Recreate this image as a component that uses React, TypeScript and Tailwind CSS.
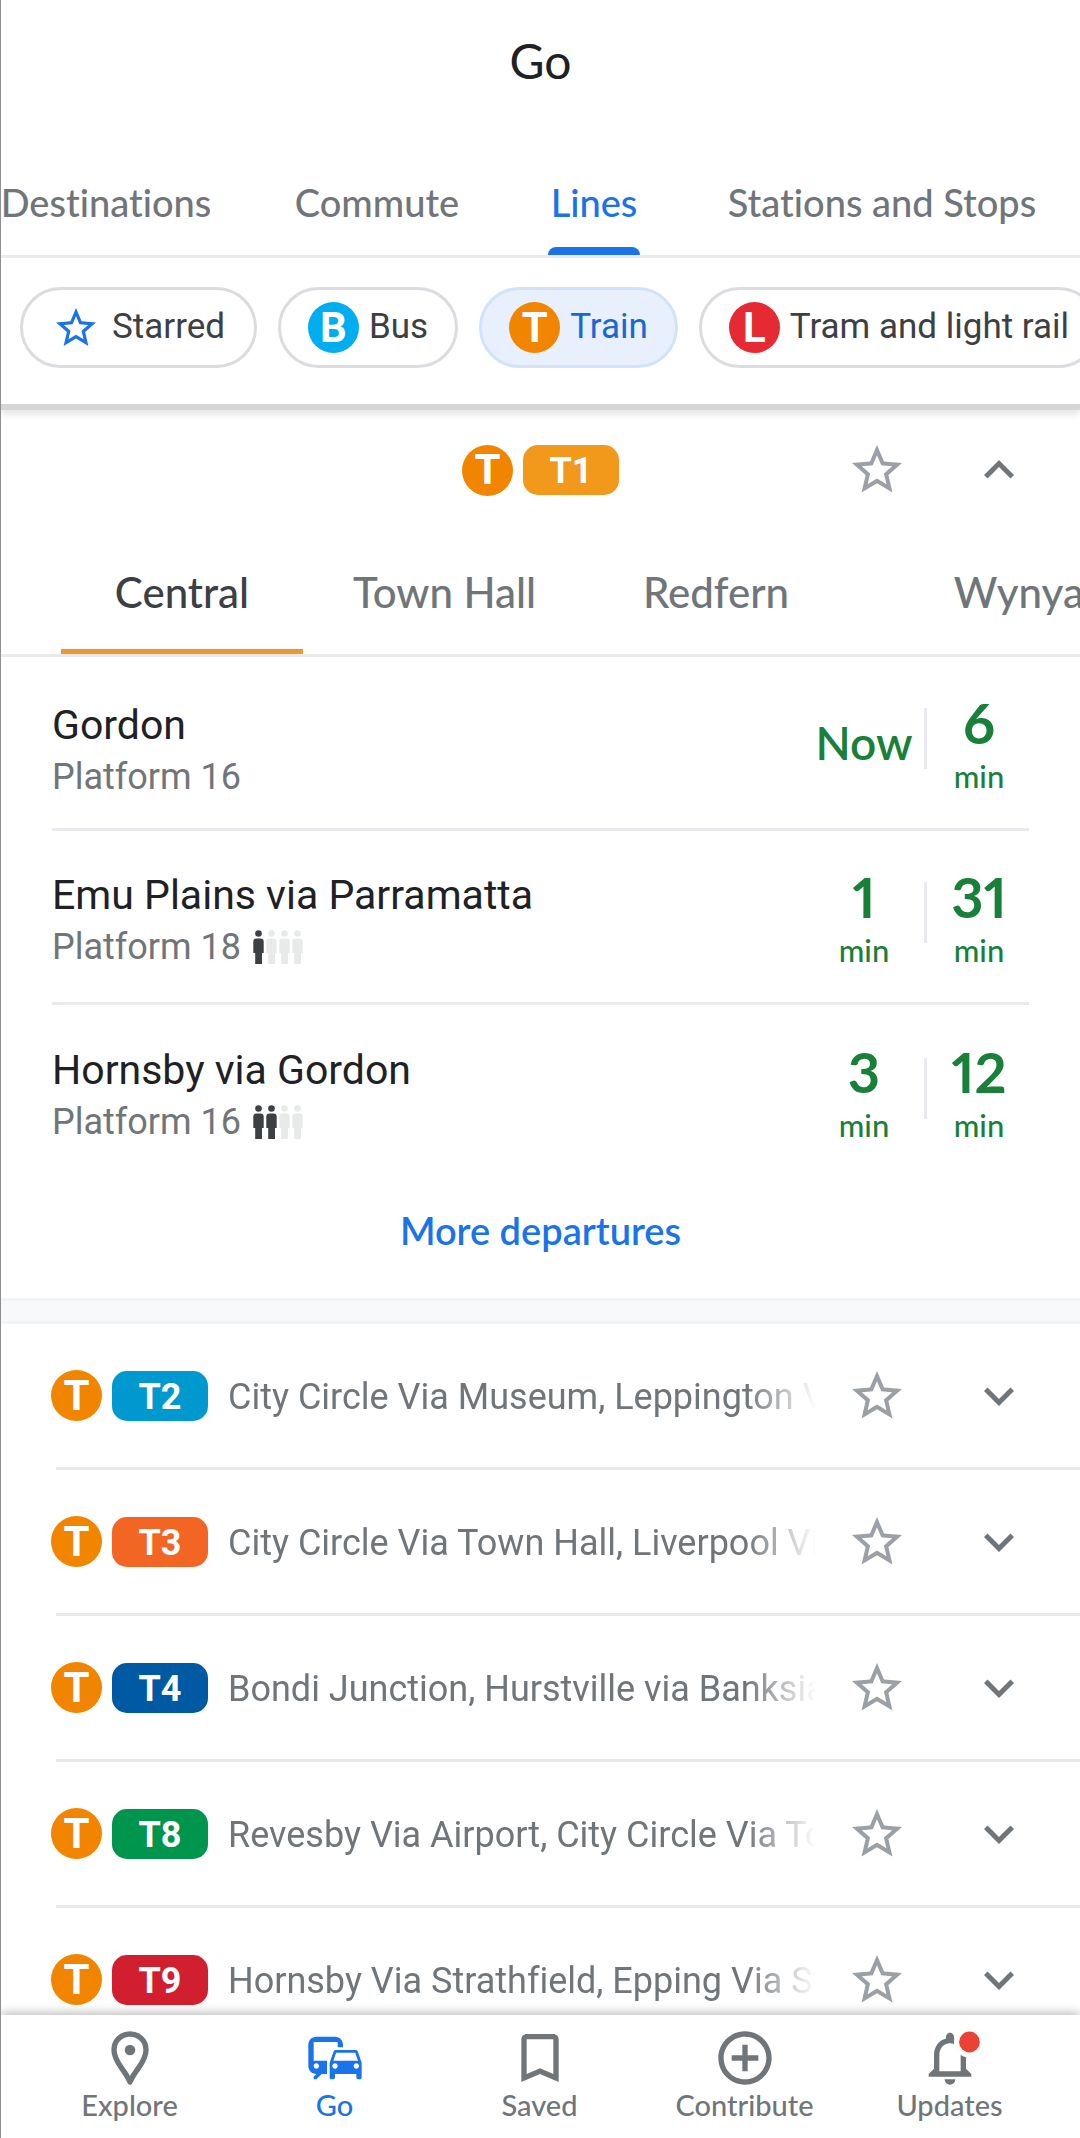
import { useState } from "react";
import type { ReactNode } from "react";
import {
  MdAddCircleOutline,
  MdBookmarkBorder,
  MdCommute,
  MdExpandLess,
  MdExpandMore,
  MdStarBorder,
} from "react-icons/md";

const sections = [
  { name: "Destinations", cell: "w-[210px]" },
  { name: "Commute", cell: "ml-[83px] w-[166px]" },
  { name: "Lines", cell: "ml-[88px] w-[92px]" },
  { name: "Stations and Stops", cell: "ml-[85px] w-[314px]" },
];

function ModeBadge({ letter, color }: { letter: string; color: string }) {
  return (
    <span
      className={`flex size-[51px] shrink-0 items-center justify-center rounded-full text-[42px] leading-none font-bold text-white ${color}`}
    >
      {letter}
    </span>
  );
}

const chips: { name: string; icon: ReactNode; gap: string; pad: string }[] = [
  { name: "Starred", icon: <MdStarBorder className="size-12 text-[#1a73e8]" />, gap: "gap-3", pad: "px-[29px]" },
  { name: "Bus", icon: <ModeBadge letter="B" color="bg-[#00aeef]" />, gap: "gap-[10px]", pad: "px-[27px]" },
  { name: "Train", icon: <ModeBadge letter="T" color="bg-[#f18500]" />, gap: "gap-[10px]", pad: "px-[27px]" },
  { name: "Tram and light rail", icon: <ModeBadge letter="L" color="bg-[#e52a33]" />, gap: "gap-[10px]", pad: "px-[27px]" },
];

const stations = [
  { name: "Central", cell: "w-[242px]" },
  { name: "Town Hall", cell: "w-[283px]" },
  { name: "Redfern", cell: "w-[260px]" },
  { name: "Wynyard", cell: "w-[384px]" },
];

type Departure = { to: string; platform: string; crowd: number; times: string[] };

const departures: Departure[] = [
  { to: "Gordon", platform: "Platform 16", crowd: 0, times: ["Now", "6"] },
  { to: "Emu Plains via Parramatta", platform: "Platform 18", crowd: 1, times: ["1", "31"] },
  { to: "Hornsby via Gordon", platform: "Platform 16", crowd: 2, times: ["3", "12"] },
];

const lines = [
  { id: "T2", color: "bg-[#0099cf]", route: "City Circle Via Museum, Leppington Via Granville" },
  { id: "T3", color: "bg-[#f26522]", route: "City Circle Via Town Hall, Liverpool Via Bankstown" },
  { id: "T4", color: "bg-[#005aa3]", route: "Bondi Junction, Hurstville via Banksia, Cronulla" },
  { id: "T8", color: "bg-[#00954c]", route: "Revesby Via Airport, City Circle Via Town Hall" },
  { id: "T9", color: "bg-[#d11f2f]", route: "Hornsby Via Strathfield, Epping Via Strathfield" },
];

function LinePill({ id, color }: { id: string; color: string }) {
  return (
    <span
      className={`flex h-[50px] w-24 shrink-0 items-center justify-center rounded-[15px] pt-[2px] text-[36px] leading-none font-bold text-white ${color}`}
    >
      {id}
    </span>
  );
}

function RowActions({ id, open }: { id: string; open?: boolean }) {
  return (
    <div className="flex shrink-0 items-center gap-[62px] pr-[51px]">
      <button type="button" aria-label={`Star ${id}`} className="text-[#9aa0a6]">
        <MdStarBorder className="size-[60px]" />
      </button>
      <button type="button" aria-label={open ? `Collapse ${id}` : `Expand ${id}`} aria-expanded={!!open} className="text-[#70757a]">
        {open ? <MdExpandLess className="size-[60px]" /> : <MdExpandMore className="size-[60px]" />}
      </button>
    </div>
  );
}

function Crowding({ level }: { level: number }) {
  return (
    <svg viewBox="0 0 50 34" className="h-[34px] w-[50px]" role="img" aria-label={`Crowding ${level} of 4`}>
      {[0, 1, 2, 3].map((i) => (
        <g key={i} transform={`translate(${i * 13} 0)`} fill={i < level ? "#3c4043" : "#e8eaea"}>
          <circle cx="5.500" cy="3.500" r="3.300" />
          <path d="M3.500 8.500h4a3.200 3.200 0 0 1 3.200 3.200V23H9v11H2.200V23H.3V11.700a3.200 3.200 0 0 1 3.200-3.200z" />
        </g>
      ))}
    </svg>
  );
}

function Time({ value }: { value: string }) {
  return (
    <div className="flex w-[100px] flex-col items-center font-[Lato,sans-serif] text-[#188038]">
      {value === "Now" ? (
        <span className="text-[46px] leading-none font-semibold">Now</span>
      ) : (
        <>
          <span className="pt-1 text-[56px] leading-[62px] font-bold proportional-nums">{value}</span>
          <span className="text-[31px] leading-[44px] font-medium">min</span>
        </>
      )}
    </div>
  );
}

function PinIcon() {
  return (
    <svg viewBox="0 0 24 24" className="size-16" aria-hidden="true">
      <path
        d="M12 3c-3.500 0-6 2.600-6 6 0 2.500 1.300 4.600 2.800 6.700C10.300 17.800 11.300 19.300 12 21c.7-1.700 1.700-3.200 3.200-5.300C16.700 13.600 18 11.500 18 9c0-3.400-2.500-6-6-6z"
        fill="none"
        stroke="currentColor"
        strokeWidth="2"
        strokeLinejoin="round"
      />
      <circle cx="12" cy="9" r="2" fill="currentColor" />
    </svg>
  );
}

function BellIcon() {
  return (
    <svg viewBox="0 0 24 24" className="size-16 overflow-visible" aria-hidden="true">
      <path
        fill="currentColor"
        d="M12 22c1.100 0 2-.9 2-2h-4c0 1.100.9 2 2 2zm6-6v-5c0-3.070-1.640-5.640-4.500-6.320V4c0-.83-.67-1.500-1.500-1.500s-1.500.67-1.500 1.500v.68C7.630 5.360 6 7.920 6 11v5l-2 2v1h16v-1l-2-2zm-2 1H8v-6c0-2.480 1.510-4.500 4-4.500s4 2.020 4 4.500v6z"
      />
      <circle cx="19.300" cy="6" r="5.800" fill="#fff" />
      <circle cx="19.300" cy="6" r="3.900" fill="#ea4335" />
    </svg>
  );
}

const destinations: { name: string; icon: ReactNode }[] = [
  { name: "Explore", icon: <PinIcon /> },
  { name: "Go", icon: <MdCommute className="size-16" /> },
  { name: "Saved", icon: <MdBookmarkBorder className="size-16" /> },
  { name: "Contribute", icon: <MdAddCircleOutline className="size-16" /> },
  { name: "Updates", icon: <BellIcon /> },
];

export default function App() {
  const [section, setSection] = useState("Lines");
  const [mode, setMode] = useState("Train");
  const [station, setStation] = useState("Central");
  const [page, setPage] = useState("Go");

  return (
    <div className="flex h-screen flex-col overflow-hidden border-l border-[#8f8f8f] bg-white font-[Roboto,sans-serif] [font-variant-ligatures:none]">
      <header className="relative z-10 shrink-0 border-b-[6px] border-[#d4d6d8] bg-white shadow-[0_4px_8px_rgba(0,0,0,0.12)]">
        <h1 className="pt-[30px] text-center font-[Lato,sans-serif] text-[48px] leading-[62px] text-[#202124]">Go</h1>
        <nav aria-label="Sections" className="mt-[63px] flex overflow-hidden border-b-[3px] border-[#e8eaed]">
          {sections.map((s) => (
            <button
              key={s.name}
              type="button"
              onClick={() => setSection(s.name)}
              className={`flex h-[100px] shrink-0 flex-col items-center justify-between pt-[22px] font-[Lato,sans-serif] text-[38px] leading-[50px] font-medium whitespace-nowrap ${s.cell} ${section === s.name ? "text-[#1a73e8]" : "text-[#70757a]"}`}
            >
              {s.name}
              <span className={`h-2 w-full rounded-t-lg ${section === s.name ? "bg-[#1a73e8]" : "bg-transparent"}`} />
            </button>
          ))}
        </nav>
        <div className="flex gap-[21px] overflow-hidden pt-[29px] pb-9 pl-[19px]">
          {chips.map((c) => (
            <button
              key={c.name}
              type="button"
              aria-pressed={mode === c.name}
              onClick={() => setMode(c.name)}
              className={`flex h-[81px] shrink-0 items-center rounded-full border-[3px] text-[35px] whitespace-nowrap ${c.gap} ${c.pad} ${mode === c.name ? "border-[#d2e3f7] bg-[#e8f0fe] text-[#1967d2]" : "border-[#dadce0] bg-white text-[#3c4043]"}`}
            >
              {c.icon}
              {c.name}
            </button>
          ))}
        </div>
      </header>

      <main className="min-h-0 flex-1 overflow-y-auto [scrollbar-width:none]">
        <section aria-label="T1">
          <div className="grid h-[120px] grid-cols-[1fr_auto_1fr] items-center">
            <div className="col-start-2 flex items-center gap-[10px]">
              <ModeBadge letter="T" color="bg-[#f18500]" />
              <LinePill id="T1" color="bg-[#f2991b]" />
            </div>
            <div className="flex justify-end">
              <RowActions id="T1" open />
            </div>
          </div>

          <div className="flex h-[127px] overflow-hidden border-b-[3px] border-[#e8eaed] pl-[60px]">
            {stations.map((s) => (
              <button
                key={s.name}
                type="button"
                onClick={() => setStation(s.name)}
                className={`flex shrink-0 flex-col items-center justify-between pt-[37px] font-[Lato,sans-serif] text-[42px] leading-[50px] font-medium whitespace-nowrap ${s.cell} ${station === s.name ? "text-[#3c4043]" : "text-[#70757a]"}`}
              >
                {s.name}
                <span className={`h-[5px] w-full ${station === s.name ? "bg-[#ea9a2d]" : "bg-transparent"}`} />
              </button>
            ))}
          </div>

          <ul className="mx-[51px] divide-y-[3px] divide-[#e8eaed]">
            {departures.map((d) => (
              <li key={d.to} className="flex h-[174px] items-center justify-between">
                <div className={d.crowd > 0 ? "pt-2" : "pt-4"}>
                  <p className="text-[41px] leading-[52px] text-[#202124]">{d.to}</p>
                  <p className="flex items-center gap-3 text-[36px] leading-[52px] text-[#70757a]">
                    {d.platform}
                    {d.crowd > 0 && <Crowding level={d.crowd} />}
                  </p>
                </div>
                <div className="flex items-center">
                  <Time value={d.times[0]} />
                  <span className="mr-[2px] mb-2 ml-[10px] h-[61px] w-[3px] bg-[#e8eaed]" />
                  <Time value={d.times[1]} />
                </div>
              </li>
            ))}
          </ul>

          <div className="flex justify-center pt-[23px] pb-10">
            <button type="button" className="font-[Lato,sans-serif] text-[38px] leading-[56px] font-semibold text-[#1a73e8]">
              More departures
            </button>
          </div>
        </section>

        <div className="h-[26px] border-y-[3px] border-[#f1f3f4] bg-[#f8f9fb]" />

        <ul>
          {lines.map((l) => (
            <li key={l.id}>
              <div className="flex h-[143px] items-center pl-[50px]">
                <ModeBadge letter="T" color="bg-[#f18500]" />
                <div className="ml-[10px] flex">
                  <LinePill id={l.id} color={l.color} />
                </div>
                <p className="mr-[31px] ml-5 min-w-0 flex-1 overflow-hidden pt-[3px] text-[36px] leading-[50px] whitespace-nowrap text-[#70757a] [mask-image:linear-gradient(to_right,black_calc(100%-70px),transparent)]">
                  {l.route}
                </p>
                <RowActions id={l.id} />
              </div>
              <div className="ml-[55px] h-[3px] bg-[#e8e8e8]" />
            </li>
          ))}
        </ul>
      </main>

      <nav
        aria-label="Main"
        className="relative z-10 grid h-[123px] shrink-0 grid-cols-5 bg-white pr-7 pl-[26px] shadow-[0_-2px_10px_rgba(0,0,0,0.28)]"
      >
        {destinations.map((d) => (
          <button
            key={d.name}
            type="button"
            onClick={() => setPage(d.name)}
            className={`flex flex-col items-center pt-[11px] font-[Lato,sans-serif] text-[29px] leading-[30px] font-medium ${page === d.name ? "text-[#1a73e8]" : "text-[#70757a]"}`}
          >
            {d.icon}
            {d.name}
          </button>
        ))}
      </nav>
    </div>
  );
}
